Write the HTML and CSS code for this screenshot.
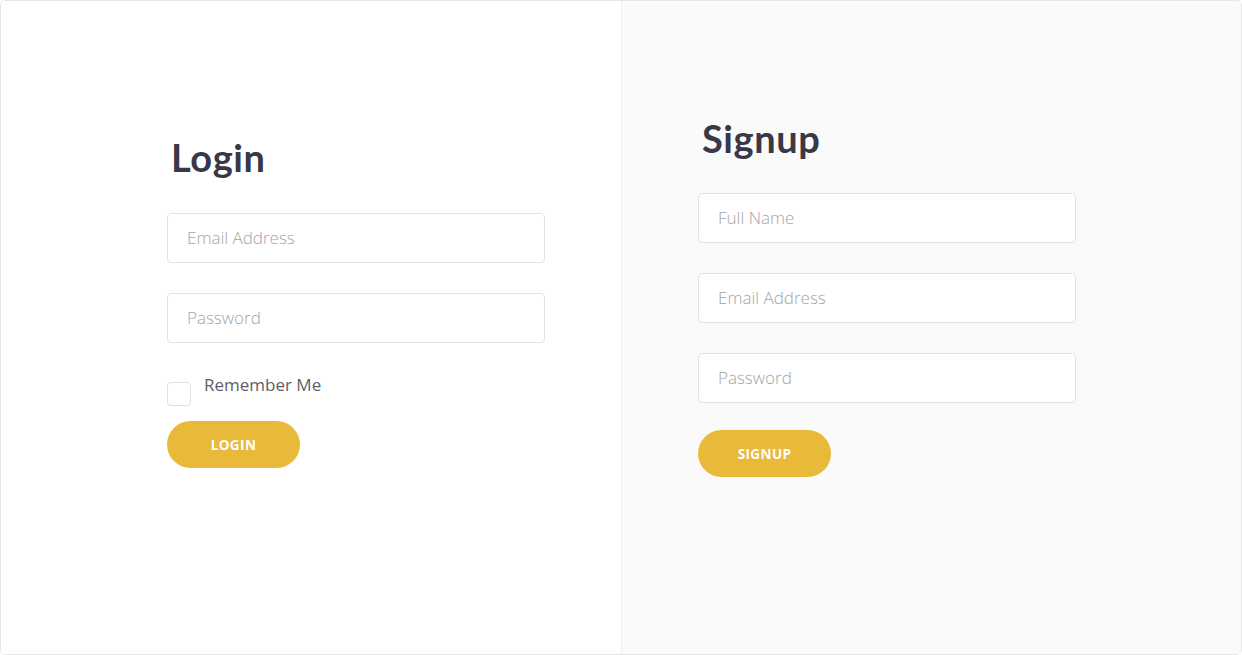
FILE: index.html
```html
<!DOCTYPE html>
<html lang="en">
<head>
<meta charset="utf-8">
<title>Login / Signup</title>
<link rel="stylesheet" href="styles.css">
</head>
<body>
<div class="frame">
  <section class="panel panel-login">
    <h1 class="title">Login</h1>
    <div class="field">Email Address</div>
    <div class="field">Password</div>
    <label class="remember">
      <span class="check"></span>
      <span class="remember-text">Remember Me</span>
    </label>
    <button class="btn">LOGIN</button>
  </section>
  <section class="panel panel-signup">
    <h1 class="title">Signup</h1>
    <div class="field">Full Name</div>
    <div class="field">Email Address</div>
    <div class="field">Password</div>
    <button class="btn btn-signup">SIGNUP</button>
  </section>
</div>
</body>
</html>
```
FILE: styles.css
```css
* { box-sizing: border-box; }
html, body { margin: 0; padding: 0; background: #ffffff; }
body { font-family: "Open Sans", "Liberation Sans", sans-serif; }

.frame {
  width: 1242px;
  height: 655px;
  border: 1px solid #e6e6e6;
  border-radius: 5px;
  display: flex;
  overflow: hidden;
  background: #fff;
}

.panel {
  display: flex;
  flex-direction: column;
  align-items: flex-start;
}
.panel-login {
  width: 621px;
  background: #ffffff;
  border-right: 1px solid #f0f0f0;
  padding: 134px 0 0 166px;
}
.panel-signup {
  flex: 1;
  background: #fafafa;
  padding: 115px 0 0 76px;
}

.title {
  margin: 0 0 34px 4px;
  font-family: "Lato", "Noto Sans", sans-serif;
  font-weight: 700;
  font-size: 38px;
  line-height: 44px;
  letter-spacing: 0.6px;
  color: #383846;
}
.panel-signup .title { margin-left: 4px; margin-bottom: 33px; }

.field {
  width: 378px;
  height: 50px;
  border: 1px solid #e2e2e2;
  border-radius: 4px;
  background: #fff;
  padding: 0 19px 2px;
  display: flex;
  align-items: center;
  font-weight: 300;
  font-size: 17px;
  color: #a4a4a8;
  margin-bottom: 30px;
}

.remember {
  display: flex;
  align-items: flex-start;
  gap: 13px;
}
.check {
  width: 24px;
  height: 24px;
  border: 1px solid #e0e0e0;
  border-radius: 4px;
  background: #fff;
  margin-top: 9px;
}
.remember-text {
  font-size: 17px;
  line-height: 24px;
  color: #5e5e68;
}

.btn {
  margin-top: 15px;
  width: 133px;
  height: 47px;
  border: none;
  border-radius: 24px;
  background: #e9b93a;
  color: #fff;
  font-family: "Open Sans", "Liberation Sans", sans-serif;
  font-weight: 700;
  font-size: 13.5px;
  letter-spacing: 0.4px;
  padding: 0;
}
.btn-signup { margin-top: -3px; }
```
